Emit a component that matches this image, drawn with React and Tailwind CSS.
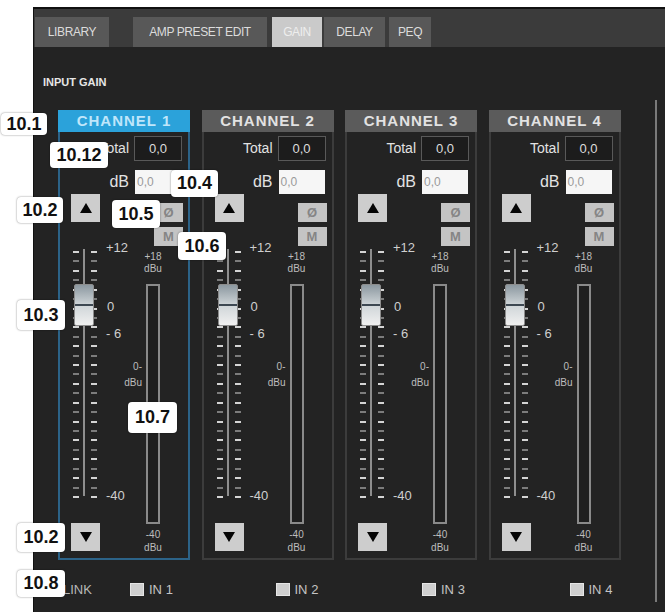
import React from 'react';

const tabs = [
  { label: 'LIBRARY', cls: 'w-[74px] mr-[24px] bg-[#585858] text-[#dcdcdc]' },
  { label: 'AMP PRESET EDIT', cls: 'w-[134px] mr-[5px] bg-[#585858] text-[#dcdcdc]' },
  { label: 'GAIN', cls: 'w-[50px] mr-[2px] bg-[#cacaca] text-[#eeeeee]' },
  { label: 'DELAY', cls: 'w-[61px] mr-[4px] bg-[#585858] text-[#dcdcdc]' },
  { label: 'PEQ', cls: 'w-[42px] bg-[#585858] text-[#dcdcdc]' },
];

const channels = [
  { id: 1, active: true },
  { id: 2, active: false },
  { id: 3, active: false },
  { id: 4, active: false },
];

const links = [
  { id: 1, cls: 'pl-[5px]' },
  { id: 2, cls: 'pl-[74px]' },
  { id: 3, cls: 'pl-[77px]' },
  { id: 4, cls: 'pl-[81px]' },
];

// callout tags laid over the screenshot
const callouts = [
  { text: '10.1', cls: 'left-[1px] top-[113px] w-[46px] h-[22px]' },
  { text: '10.12', cls: 'left-[50px] top-[142px] w-[58px] h-[26px]' },
  { text: '10.4', cls: 'left-[171px] top-[170px] w-[47px] h-[27px]' },
  { text: '10.2', cls: 'left-[17px] top-[197px] w-[46px] h-[26px]' },
  { text: '10.5', cls: 'left-[112px] top-[200px] w-[48px] h-[28px]' },
  { text: '10.6', cls: 'left-[178px] top-[232px] w-[48px] h-[28px]' },
  { text: '10.3', cls: 'left-[17px] top-[300px] w-[48px] h-[30px]' },
  { text: '10.7', cls: 'left-[128px] top-[402px] w-[49px] h-[31px]' },
  { text: '10.2', cls: 'left-[17px] top-[523px] w-[48px] h-[29px]' },
  { text: '10.8', cls: 'left-[17px] top-[570px] w-[48px] h-[27px]' },
];

const Arrow = ({ down }) => (
  <div className="flex h-[28px] w-[29px] items-center justify-center bg-[#cdcdcd]">
    <svg width="12" height="10" viewBox="0 0 12 10">
      {down ? <path d="M0 0 L12 0 L6 10 Z" fill="#050505" /> : <path d="M6 0 L12 10 L0 10 Z" fill="#050505" />}
    </svg>
  </div>
);

const SmallBtn = ({ children }) => (
  <div className="flex h-[19px] w-[29px] items-center justify-center bg-[#c4c4c4] text-[13px] font-bold text-[#858585]">
    {children}
  </div>
);

const Scale = () => (
  <div className="relative mt-[25px] h-[255px] w-[60px]">
    <div className="absolute left-[2px] top-[4px] bottom-[4px] flex flex-col justify-between">
      {Array.from({ length: 27 }).map((_, i) => (
        <div key={i} className="flex gap-[12px]">
          <div className={i % 2 ? 'h-[2px] w-[6px] bg-[#7c7c7c]' : 'h-[2px] w-[6px] bg-[#d4d4d4]'} />
          <div className={i % 2 ? 'h-[2px] w-[6px] bg-[#7c7c7c]' : 'h-[2px] w-[6px] bg-[#d4d4d4]'} />
        </div>
      ))}
    </div>
    <div className="absolute left-[12px] top-[2px] bottom-[6px] w-[2px] bg-[#8e8e8e]" />
    <div className="absolute left-[3px] top-[37px] h-[42px] w-[20px] rounded-[2px] border border-[#8d8d8d] bg-linear-to-b from-[#8c98a0] via-[#cfd5d8] to-[#f0f0f0]">
      <div className="mt-[19px] h-[2px] bg-[#3d4852]" />
    </div>
    <span className="absolute left-[35px] top-[-6px] text-[13px] leading-[14px] text-[#cfcfcf]">+12</span>
    <span className="absolute left-[36px] top-[53px] text-[13px] leading-[14px] text-[#cfcfcf]">0</span>
    <span className="absolute left-[35px] top-[80px] text-[13px] leading-[14px] text-[#cfcfcf]">- 6</span>
    <span className="absolute left-[35px] top-[242px] text-[13px] leading-[14px] text-[#cfcfcf]">-40</span>
  </div>
);

const Channel = ({ id, active }) => (
  <div className="flex w-[132px] flex-col">
    <div
      className={
        active
          ? 'flex h-[22px] items-center justify-center bg-[#2ba2da] text-[15px] font-bold tracking-[1px] text-[#bfe6fa]'
          : 'flex h-[22px] items-center justify-center bg-[#5b5b5b] text-[15px] font-bold tracking-[1px] text-[#e2e2e2]'
      }
    >
      CHANNEL {id}
    </div>
    <div
      className={
        active
          ? 'flex h-[428px] flex-col border-x-2 border-b-2 border-[#2c6388]'
          : 'flex h-[428px] flex-col border-x-2 border-b-2 border-[#3c3c3c]'
      }
    >
      <div className="mt-[4px] flex items-center justify-end gap-[5px] pr-[6px]">
        <span className="text-[14px] text-[#e2e2e2]">Total</span>
        <div className="flex h-[25px] w-[48px] items-center justify-center border border-[#595959] bg-[#1c1c1c] text-[13px] text-[#dcdcdc]">
          0,0
        </div>
      </div>
      <div className="mt-[9px] flex items-center justify-end gap-[6px] pr-[7px]">
        <span className="text-[16px] text-[#e2e2e2]">dB</span>
        <div className="flex h-[24px] w-[46px] items-center bg-[#f6f6f6] pl-[2px] text-[12px] text-[#9a9a9a]">
          0,0
        </div>
      </div>
      <div className="flex">
        <div className="flex w-[73px] flex-col pl-[11px]">
          <Arrow />
          <Scale />
          <div className="mt-[21px]">
            <Arrow down />
          </div>
        </div>
        <div className="flex w-[55px] flex-col">
          <div className="ml-[21px] mt-[9px] flex flex-col gap-[5px]">
            <SmallBtn>Ø</SmallBtn>
            <SmallBtn>M</SmallBtn>
          </div>
          <div className="mt-[5px] w-[40px] text-center text-[10px] leading-[12px] text-[#bdbdbd]">
            <div>+18</div>
            <div>dBu</div>
          </div>
          <div className="relative ml-[13px] mt-[9px] h-[240px] w-[14px] border-2 border-[#8a8a8a] bg-[#1e1e1e]">
            <div className="absolute right-[16px] top-[73px] text-right text-[10px] leading-[16px] text-[#bdbdbd]">
              <div>0-</div>
              <div>dBu</div>
            </div>
          </div>
          <div className="mt-[4px] w-[40px] text-center text-[10px] leading-[13px] text-[#bdbdbd]">
            <div>-40</div>
            <div>dBu</div>
          </div>
        </div>
      </div>
    </div>
  </div>
);

export default function App() {
  return (
    <div className="relative h-[612px] w-[665px] overflow-hidden bg-white font-['Liberation_Sans',Arial,sans-serif]">
      <div className="ml-[33px] mt-[7px] flex h-[605px] flex-col border-t-2 border-l border-[#111] bg-[#232323]">
        <div className="flex h-[38px] items-end bg-[#3b3b3b] pl-[1px]">
          {tabs.map((t) => (
            <div
              key={t.label}
              className={`flex h-[30px] items-center justify-center text-[12px] tracking-[-0.4px] ${t.cls}`}
            >
              {t.label}
            </div>
          ))}
        </div>
        <div className="flex flex-1">
          <div className="flex-1">
            <div className="ml-[9px] mt-[29px] text-[11px] font-bold leading-[12px] text-[#e6e6e6]">INPUT GAIN</div>
            <div className="ml-[24px] mt-[22px] flex gap-[11.5px]">
              {channels.map((c) => (
                <Channel key={c.id} {...c} />
              ))}
            </div>
            <div className="ml-[24px] mt-[20px] flex gap-[11.5px]">
              {links.map((l) => (
                <div key={l.id} className={`flex w-[132px] items-center ${l.cls}`}>
                  {l.id === 1 && <span className="w-[67px] text-[13px] text-[#b8b8b8]">LINK</span>}
                  <div className="h-[13px] w-[14px] border border-[#e6e6e6] bg-[#cfcfcf]" />
                  <span className="ml-[5px] text-[13px] text-[#c4c4c4]">IN {l.id}</span>
                </div>
              ))}
            </div>
          </div>
          <div className="mb-[10px] mr-[8px] mt-[53px] w-[2px] bg-[#7a7a7a]" />
        </div>
      </div>

      {callouts.map((c, i) => (
        <div
          key={i}
          className={`absolute flex items-center justify-center rounded-[4px] bg-white text-[18px] font-bold text-[#111] shadow-[0_0_2px_rgba(0,0,0,0.5)] ${c.cls}`}
        >
          {c.text}
        </div>
      ))}
    </div>
  );
}
